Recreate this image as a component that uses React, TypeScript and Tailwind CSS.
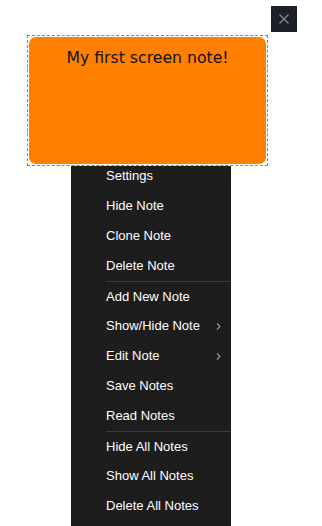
import React from "react";

type MenuItem = {
  label: string;
  sub?: boolean;
  divider?: boolean;
};

const items: MenuItem[] = [
  { label: "Settings" },
  { label: "Hide Note" },
  { label: "Clone Note" },
  { label: "Delete Note" },
  { label: "Add New Note", divider: true },
  { label: "Show/Hide Note", sub: true },
  { label: "Edit Note", sub: true },
  { label: "Save Notes" },
  { label: "Read Notes" },
  { label: "Hide All Notes", divider: true },
  { label: "Show All Notes" },
  { label: "Delete All Notes" },
];

const Chevron: React.FC<{}> = () => (
  <svg width="5" height="7" viewBox="0 0 5 7" className="text-[#9a9a9a]">
    <polyline points="1,0.5 4,3.5 1,6.5" fill="none" stroke="currentColor" strokeWidth="1.1" />
  </svg>
);

const ContextMenu: React.FC<{}> = () => {
  return (
    <div className="ml-[71px] w-[160px] overflow-hidden bg-[#1d1d1d] pb-[10px] font-['Liberation_Sans',Arial,sans-serif] text-[13px] text-white">
      <ul className="-mt-[4px]">
        {items.map((item) => (
          <li
            key={item.label}
            className={
              item.divider
                ? "ml-[35px] flex h-[30px] items-center justify-between border-t border-[#3c3c3c] pr-[10px]"
                : "ml-[35px] flex h-[30px] items-center justify-between pr-[10px]"
            }
          >
            <span>{item.label}</span>
            {item.sub && <Chevron />}
          </li>
        ))}
      </ul>
    </div>
  );
};

export default function App() {
  return (
    <div className="relative min-h-[526px] w-full bg-white">
      {/* close button */}
      <button className="absolute left-[271px] top-[6px] flex h-[26px] w-[26px] items-center justify-center bg-[#1e2029]">
        <svg width="10" height="10" viewBox="0 0 10 10">
          <path d="M0.5 0.5 L9.5 9.5 M9.5 0.5 L0.5 9.5" stroke="#8a8d94" strokeWidth="1.2" />
        </svg>
      </button>

      <div className="pt-[35px]">
        <div className="relative z-10 ml-[27px] h-[131px] w-[241px] border border-dashed border-[#e8662e] bg-white p-px">
          <div className="h-full w-full rounded-[7px] bg-[#ff8000] pt-[9px] text-center font-['DejaVu_Sans',sans-serif] text-[15.7px] text-[#111]">
            My first screen note!
          </div>
        </div>
        <div className="-mt-px">
          <ContextMenu />
        </div>
      </div>
    </div>
  );
}
